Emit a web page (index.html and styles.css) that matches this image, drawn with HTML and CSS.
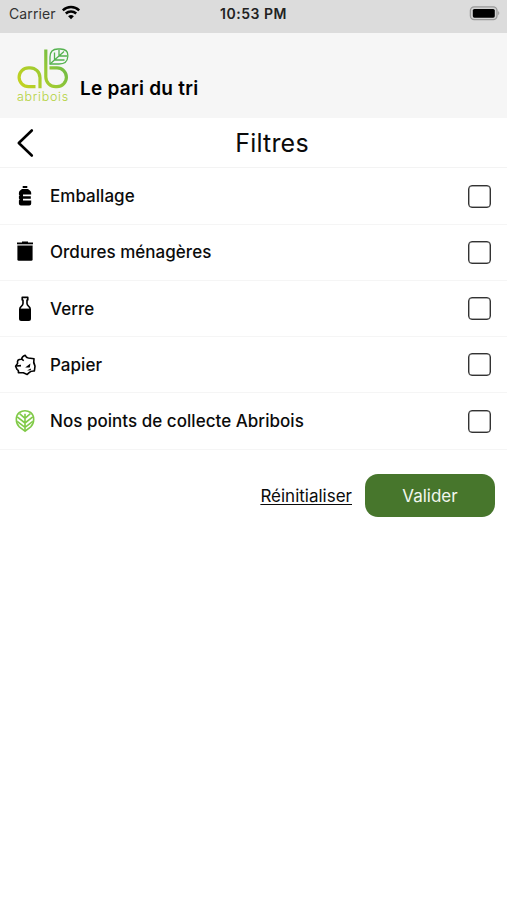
FILE: index.html
```html
<!DOCTYPE html>
<html lang="fr">

<head>
    <meta charset="utf-8">
    <title>Le pari du tri</title>
    <link rel="stylesheet" href="styles.css">
</head>

<body>
    <div class="status-bar">
        <div class="carrier">
            <span class="carrier-name">Carrier</span>
            <svg class="wifi" width="20" height="15" viewBox="0 0 20 15">
                <path d="M1.8 5.3 A12 12 0 0 1 18.2 5.3" />
                <path d="M4.8 8.5 A7.6 7.6 0 0 1 15.2 8.5" />
                <path class="wifi-dot" d="M10 14.2 L7.1 11.3 Q10 8.8 12.9 11.3 Z" />
            </svg>
        </div>
        <span class="clock">10:53 PM</span>
        <svg class="battery" width="32" height="16" viewBox="0 0 32 16">
            <rect x="1.4" y="1.8" width="26.6" height="12.8" rx="3.8" fill="#d2d2d2" stroke="#999" stroke-width="1.3" />
            <rect x="3.8" y="3.9" width="22" height="8.8" rx="1.6" fill="#000" />
            <path d="M29.2 6 Q31.4 8.1 29.2 10.2 Z" fill="#999" />
        </svg>
    </div>

    <header class="header">
        <div class="logo">
            <svg class="logo-mark" width="54" height="42" viewBox="0 0 54 42">
                <defs>
                    <linearGradient id="leafGreen" gradientUnits="userSpaceOnUse" x1="0" y1="42" x2="54" y2="0">
                        <stop offset="0" stop-color="#cdd41c" />
                        <stop offset="0.5" stop-color="#9aca34" />
                        <stop offset="1" stop-color="#4fb052" />
                    </linearGradient>
                </defs>
                <!-- round loops and stems of the emblem -->
                <g fill="none" stroke="url(#leafGreen)" stroke-width="3.2">
                    <path d="M19.5 38.6 H12.5 A9.4 9.4 0 0 1 12.5 19.8 H14 A10 10 0 0 1 24 29.8 V40.2" />
                    <path d="M29.8 1.5 V29 A9.7 9.7 0 0 0 39.5 38.6 H41 A9.4 9.4 0 0 0 41 19.8 H33.5" />
                </g>
                <g fill="none" stroke="#55b24f" stroke-width="1.3">
                    <path d="M34 16 V9 Q34 1 42 1 H44.5 Q51.8 1.2 51.8 7 V8.5 Q51.4 16 43 16 Z" />
                    <path d="M34 16 L48 3.6 M38.5 12 V4.5 M43 8 V2 M38.5 12 H48.5 M43 8 H51" />
                </g>
            </svg>
            <span class="logo-name">abribois</span>
        </div>
        <h1 class="app-name">Le pari du tri</h1>
    </header>

    <div class="title-bar">
        <svg class="back" width="18" height="30" viewBox="0 0 18 30">
            <path d="M15.8 2.5 L2.8 15 L15.8 27.5" />
        </svg>
        <h2 class="title">Filtres</h2>
    </div>

    <div class="filters">
        <label class="filter">
            <svg class="icon" width="24" height="28" viewBox="0 0 24 28">
                <path d="M9.7 4 H14.3 V6 H9.7 Z" />
                <path d="M9 7 H15 L17.2 8.8 Q18.2 9.8 18.2 11 V12.6 H10 V14.2 H17.8 V16.8 H10 V18.4 H18.2 V21.6 Q18.2 23.6 16.2 23.6 H7.9 Q5.9 23.6 5.9 21.6 V18.4 L6.6 17.6 L5.9 16.6 V14.2 L6.6 13.4 L5.9 12.6 V11 Q5.9 9.8 6.8 8.8 Z" />
            </svg>
            <span class="name">Emballage</span>
            <input type="checkbox" class="box">
        </label>
        <label class="filter">
            <svg class="icon" width="24" height="28" viewBox="0 0 24 28">
                <path d="M4 4.4 H9 V3.6 H15 V4.4 H20 V6.2 H4 Z" />
                <path d="M4.4 6.2 H19.6 V8.2 H4.4 Z" fill="#aaa" />
                <path d="M4.4 7.8 H19.6 V21.4 Q19.6 22.8 18.2 22.8 H5.8 Q4.4 22.8 4.4 21.4 Z" />
            </svg>
            <span class="name">Ordures ménagères</span>
            <input type="checkbox" class="box">
        </label>
        <label class="filter">
            <svg class="icon" width="24" height="28" viewBox="0 0 24 28">
                <path class="line" d="M9.2 2.4 H14.8 V5 H14 V8.5 Q14 10 15.7 11.3 Q17.2 12.4 17.2 14.2 V23.5 Q17.2 25.2 15.5 25.2 H8.5 Q6.8 25.2 6.8 23.5 V14.2 Q6.8 12.4 8.3 11.3 Q10 10 10 8.5 V5 H9.2 Z" />
                <path d="M6.8 13.6 H17.2 V25.2 H6.8 Z" />
            </svg>
            <span class="name">Verre</span>
            <input type="checkbox" class="box">
        </label>
        <label class="filter">
            <svg class="icon" width="24" height="28" viewBox="0 0 24 28">
                <path class="line" d="M12.2 4.2 Q13 6.6 15.4 7 L21 7.8 Q20 11.5 22 15.2 L21.4 20 Q18 19.8 16.4 21.4 L14.2 23.4 L10.3 21.8 L5.4 21.8 Q6 19.4 4 18.4 L2.6 15.2 L4.6 12.4 Q3.6 8 8.6 8.2 Q9 5.2 12.2 4.2 Z" />
                <path d="M12.2 16.4 L17.4 12.6 L16.8 16.4 Z M14 19.4 L17.8 17.4 L17.9 19.2 Z" />
                <path class="line" d="M3.2 15 L8 14.6 M8.6 8.2 L10.8 9.6" />
            </svg>
            <span class="name">Papier</span>
            <input type="checkbox" class="box">
        </label>
        <label class="filter">
            <svg class="icon icon-leaf" width="24" height="28" viewBox="0 0 24 28">
                <path d="M12 24.2 L6.3 19.8 Q3.3 17 3.3 12.3 Q3.3 7.8 6.4 5.5 Q9 3.7 12 3.7 Q15 3.7 17.6 5.5 Q20.7 7.8 20.7 12.3 Q20.7 17 17.7 19.8 Z" />
                <path d="M12 6.8 V24 M12 11.4 L6.6 6.6 M12 11.4 L17.4 6.6 M12 16 L4.2 9.8 M12 16 L19.8 9.8 M12 20.4 L4.2 14.4 M12 20.4 L19.8 14.4" />
            </svg>
            <span class="name">Nos points de collecte Abribois</span>
            <input type="checkbox" class="box">
        </label>
    </div>

    <div class="actions">
        <a class="reset">Réinitialiser</a>
        <button class="submit" type="button">Valider</button>
    </div>
</body>

</html>
```
FILE: styles.css
```css
* {
    box-sizing: border-box;
}

body {
    margin: 0;
    min-height: 900px;
    background-color: #fff;
    color: #0b0b0b;
    font-family: Inter, "Liberation Sans", sans-serif;
}

/* Phone status bar */
.status-bar {
    display: grid;
    grid-template-columns: 1fr auto 1fr;
    height: 33px;
    padding: 5px 6px 0;
    background-color: #dcdcdc;
    align-items: start;
}

.carrier {
    display: flex;
    gap: 5px;
    padding-left: 3px;
    font-size: 14px;
    line-height: 18px;
    color: #333;
}

.carrier-name {
    letter-spacing: 0.1px;
}

.wifi {
    fill: none;
    stroke: #000;
    stroke-width: 2.4;
}

.wifi .wifi-dot {
    fill: #000;
    stroke: none;
}

.clock {
    font-size: 14px;
    font-weight: 600;
    line-height: 18px;
    letter-spacing: 0.5px;
    color: #222;
}

.battery {
    justify-self: end;
}

/* Logo and name */
.header {
    display: flex;
    height: 85px;
    padding: 15px 16px 0;
    background-color: #f6f6f6;
}

.logo {
    display: flex;
    flex-direction: column;
    width: 54px;
}

.logo-name {
    font-size: 12.5px;
    line-height: 14px;
    letter-spacing: 0.7px;
    padding-left: 1px;
    color: #b4d23c;
    font-weight: 300;
}

.app-name {
    margin: 28px 0 0 10px;
    font-size: 19px;
    line-height: 25px;
    letter-spacing: 0.25px;
    font-weight: 600;
    color: #000;
}

/* Page title */
.title-bar {
    display: grid;
    grid-template-columns: 37px 1fr;
    height: 50.4px;
    padding-left: 16px;
    border-bottom: 1px solid #f3f3f3;
    align-items: center;
}

.back {
    fill: none;
    stroke: #000;
    stroke-width: 2.6;
    stroke-linecap: round;
    stroke-linejoin: round;
}

.title {
    margin: 0;
    padding-right: 16px;
    font-size: 25px;
    font-weight: 400;
    line-height: 30px;
    letter-spacing: 0.2px;
    text-align: center;
}

/* Filters */
.filter {
    display: flex;
    height: 56.25px;
    padding: 0 16px 0 13px;
    border-bottom: 1px solid #f5f5f5;
    align-items: center;
}

.icon {
    flex: none;
    fill: #000;
}

.icon .line {
    fill: none;
    stroke: #000;
    stroke-width: 1.6;
    stroke-linejoin: round;
}

.icon-leaf {
    fill: none;
    stroke: #80ca48;
    stroke-width: 1.6;
}

.name {
    flex: 1;
    margin-left: 13px;
    font-size: 17px;
    font-weight: 500;
    letter-spacing: 0.03px;
}

.box {
    appearance: none;
    width: 23px;
    height: 23px;
    margin: 0;
    border: 1.6px solid #333;
    border-radius: 4px;
    box-shadow: inset 0 0 0 0.5px #555;
}

/* Buttons */
.actions {
    display: flex;
    justify-content: flex-end;
    align-items: center;
    gap: 13px;
    padding: 24.6px 12px 0 0;
}

.reset {
    font-size: 17px;
    text-decoration: underline;
    text-underline-offset: 2px;
}

.submit {
    width: 130px;
    height: 43px;
    padding: 0;
    border: none;
    border-radius: 13px;
    background-color: #47762c;
    color: #f1f6ee;
    font-family: inherit;
    font-size: 17px;
}
```
